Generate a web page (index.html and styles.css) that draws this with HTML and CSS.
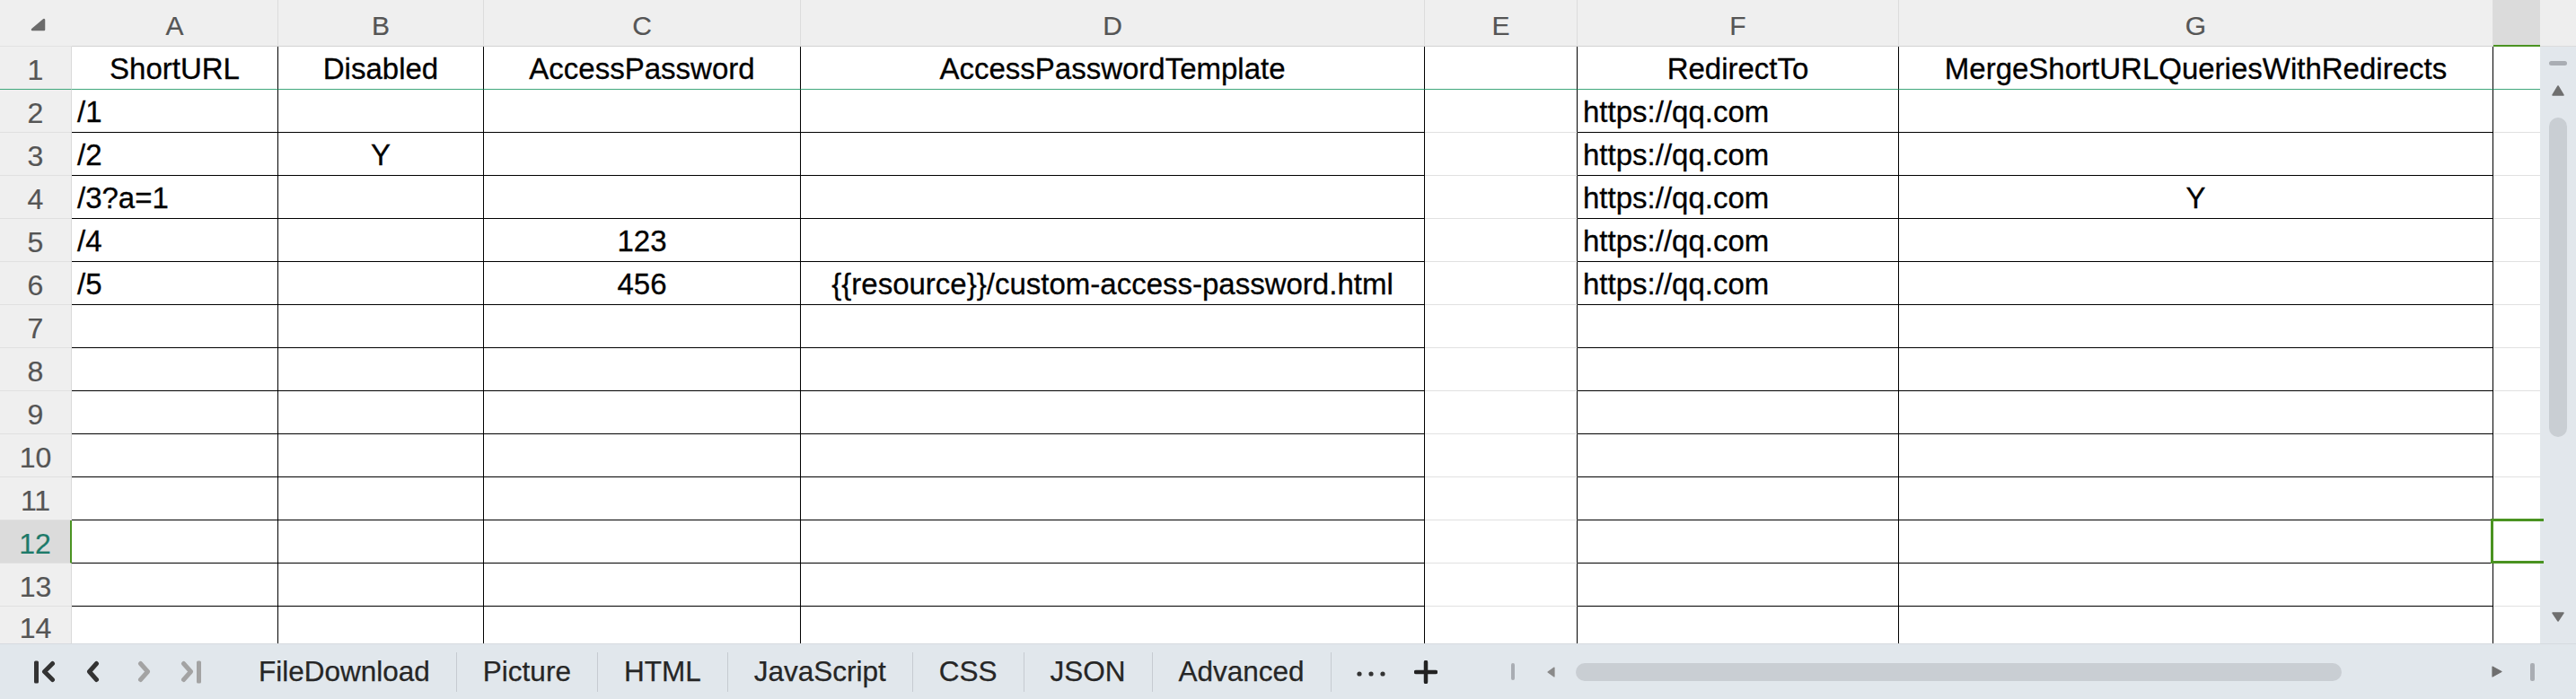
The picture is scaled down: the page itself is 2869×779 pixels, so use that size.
FILE: index.html
```html
<!DOCTYPE html>
<html>
<head>
<meta charset="utf-8">
<link rel="stylesheet" href="styles.css">
</head>
<body>
<div class="app">
  <div class="sheet">
    <div class="grid">
      <div class="corner"><svg class="tri" width="80" height="52" viewBox="0 0 80 52"><path d="M49 22 L49 33 L36 33 Z" fill="#6b6b6b" stroke="#6b6b6b" stroke-width="2.5" stroke-linejoin="round"/></svg></div>
      <div class="ch">A</div><div class="ch">B</div><div class="ch">C</div><div class="ch">D</div><div class="ch">E</div><div class="ch">F</div><div class="ch">G</div><div class="ch chsel"></div>

      <div class="rh r1">1</div>
      <div class="c r1 ctr">ShortURL</div>
      <div class="c r1 ctr">Disabled</div>
      <div class="c r1 ctr">AccessPassword</div>
      <div class="c r1 ctr">AccessPasswordTemplate</div>
      <div class="c r1 e"></div>
      <div class="c r1 ctr">RedirectTo</div>
      <div class="c r1 ctr">MergeShortURLQueriesWithRedirects</div>
      <div class="c r1 h"></div>

      <div class="rh">2</div>
      <div class="c">/1</div><div class="c"></div><div class="c"></div><div class="c"></div><div class="c e"></div><div class="c">https://qq.com</div><div class="c"></div><div class="c h"></div>

      <div class="rh">3</div>
      <div class="c">/2</div><div class="c ctr">Y</div><div class="c"></div><div class="c"></div><div class="c e"></div><div class="c">https://qq.com</div><div class="c"></div><div class="c h"></div>

      <div class="rh">4</div>
      <div class="c">/3?a=1</div><div class="c"></div><div class="c"></div><div class="c"></div><div class="c e"></div><div class="c">https://qq.com</div><div class="c ctr">Y</div><div class="c h"></div>

      <div class="rh">5</div>
      <div class="c">/4</div><div class="c"></div><div class="c ctr">123</div><div class="c"></div><div class="c e"></div><div class="c">https://qq.com</div><div class="c"></div><div class="c h"></div>

      <div class="rh">6</div>
      <div class="c">/5</div><div class="c"></div><div class="c ctr">456</div><div class="c ctr">{{resource}}/custom-access-password.html</div><div class="c e"></div><div class="c">https://qq.com</div><div class="c"></div><div class="c h"></div>

      <div class="rh">7</div>
      <div class="c"></div><div class="c"></div><div class="c"></div><div class="c"></div><div class="c e"></div><div class="c"></div><div class="c"></div><div class="c h"></div>

      <div class="rh">8</div>
      <div class="c"></div><div class="c"></div><div class="c"></div><div class="c"></div><div class="c e"></div><div class="c"></div><div class="c"></div><div class="c h"></div>

      <div class="rh">9</div>
      <div class="c"></div><div class="c"></div><div class="c"></div><div class="c"></div><div class="c e"></div><div class="c"></div><div class="c"></div><div class="c h"></div>

      <div class="rh">10</div>
      <div class="c"></div><div class="c"></div><div class="c"></div><div class="c"></div><div class="c e"></div><div class="c"></div><div class="c"></div><div class="c h"></div>

      <div class="rh">11</div>
      <div class="c"></div><div class="c"></div><div class="c"></div><div class="c"></div><div class="c e"></div><div class="c"></div><div class="c"></div><div class="c h"></div>

      <div class="rh rhsel">12</div>
      <div class="c"></div><div class="c"></div><div class="c"></div><div class="c"></div><div class="c e"></div><div class="c"></div><div class="c"></div><div class="c h active"></div>

      <div class="rh">13</div>
      <div class="c"></div><div class="c"></div><div class="c"></div><div class="c"></div><div class="c e"></div><div class="c"></div><div class="c"></div><div class="c h"></div>

      <div class="rh last">14</div>
      <div class="c last"></div><div class="c last"></div><div class="c last"></div><div class="c last"></div><div class="c e last"></div><div class="c last"></div><div class="c last"></div><div class="c h last"></div>
    </div>
    <div class="vscroll">
      <div class="vs-top"></div>
      <div class="vs-track">
        <div class="vs-handle"></div>
        <svg class="vs-up" width="14" height="12" viewBox="0 0 14 12"><path d="M7 1 L13 11 L1 11 Z" fill="#6f6f6f" stroke="#6f6f6f" stroke-width="1.5" stroke-linejoin="round"/></svg>
        <div class="vs-thumb"></div>
        <svg class="vs-down" width="14" height="11" viewBox="0 0 14 11"><path d="M1 1 L13 1 L7 10 Z" fill="#6f6f6f" stroke="#6f6f6f" stroke-width="1.5" stroke-linejoin="round"/></svg>
      </div>
    </div>
  </div>
  <div class="tabbar">
    <svg class="nav" width="200" height="26" viewBox="0 0 200 26">
      <rect x="8" y="0.5" width="5" height="25" rx="1.5" fill="#333"/>
      <polyline points="28.5,3.5 19.5,12.5 28.5,21.5" fill="none" stroke="#333" stroke-width="5" stroke-linecap="round" stroke-linejoin="round"/>
      <polyline points="77.5,3.5 69.5,12.5 77.5,21.5" fill="none" stroke="#333" stroke-width="5" stroke-linecap="round" stroke-linejoin="round"/>
      <polyline points="126.5,3.5 134.5,12.5 126.5,21.5" fill="none" stroke="#a3a3a3" stroke-width="5" stroke-linecap="round" stroke-linejoin="round"/>
      <polyline points="174.5,3.5 182.5,12.5 174.5,21.5" fill="none" stroke="#a3a3a3" stroke-width="5" stroke-linecap="round" stroke-linejoin="round"/>
      <rect x="189" y="0.5" width="5" height="25" rx="1.5" fill="#a3a3a3"/>
    </svg>
    <div class="tabs">
      <div class="tab">FileDownload</div>
      <div class="tab">Picture</div>
      <div class="tab">HTML</div>
      <div class="tab">JavaScript</div>
      <div class="tab">CSS</div>
      <div class="tab">JSON</div>
      <div class="tab">Advanced</div>
    </div>
    <svg class="more" width="34" height="8" viewBox="0 0 34 8"><circle cx="3" cy="4" r="2.6" fill="#333"/><circle cx="16" cy="4" r="2.6" fill="#333"/><circle cx="29" cy="4" r="2.6" fill="#333"/></svg>
    <svg class="add" width="26" height="26" viewBox="0 0 26 26"><path d="M13 2 V24 M2 13 H24" stroke="#222" stroke-width="4.5" stroke-linecap="round"/></svg>
    <div class="hscroll">
      <div class="hs-bar"></div>
      <svg class="hs-left" width="9" height="12" viewBox="0 0 9 12"><path d="M8 1 L1 6 L8 11 Z" fill="#8a8a8a" stroke="#8a8a8a" stroke-width="1.2" stroke-linejoin="round"/></svg>
      <div class="hs-thumb"></div>
      <svg class="hs-right" width="12" height="13" viewBox="0 0 12 13"><path d="M1 1 L11 6.5 L1 12 Z" fill="#6f6f6f" stroke="#6f6f6f" stroke-width="1.2" stroke-linejoin="round"/></svg>
      <div class="hs-bar hs-bar2"></div>
    </div>
  </div>
</div>
</body>
</html>
```

FILE: styles.css
```css
* { box-sizing: border-box; }
html, body { margin: 0; padding: 0; background: #fff; }
body { font-family: "Liberation Sans", Arial, sans-serif; }

.app {
  width: 2869px;
  height: 779px;
  display: flex;
  flex-direction: column;
  overflow: hidden;
}

.sheet {
  display: flex;
  height: 717px;
  overflow: hidden;
  flex: none;
}

.grid {
  display: grid;
  grid-template-columns: 80px 230px 229px 353px 695px 170px 358px 662px 52px;
  grid-template-rows: 52px repeat(13, 48px) 41px;
  width: 2829px;
  flex: none;
}

.corner {
  background: #efefef;
  border-bottom: 1px solid #e2e2e2;
}
.tri { display: block; }

.ch {
  background: #efefef;
  color: #555;
  font-size: 30px;
  border-right: 1px solid #dcdcdc;
  border-bottom: 1px solid #d2d2d2;
  display: flex;
  align-items: flex-end;
  justify-content: center;
  padding-bottom: 5px;
  line-height: 1.15;
  -webkit-text-stroke: 0.2px #555;
}
.ch.chsel {
  background: #dbdbdb;
  border-right: none;
  border-bottom: 2px solid #4a9321;
}

.rh {
  background: #efefef;
  color: #555;
  font-size: 32px;
  border-right: 1px solid #dadada;
  border-bottom: 1px solid #e0e0e0;
  display: flex;
  align-items: flex-end;
  justify-content: center;
  padding-bottom: 5px;
  line-height: 1;
  -webkit-text-stroke: 0.2px #555;
}
.rh.r1 { border-bottom-color: #41a87c; }
.rh.rhsel {
  background: #dbdbdb;
  color: #1d7a69;
  -webkit-text-stroke: 0.2px #1d7a69;
  border-right: 2px solid #4a9321;
}
.rh.last { border-bottom: none; padding-bottom: 1px; }

.c {
  position: relative;
  background: #fff;
  color: #000;
  font-size: 33px;
  line-height: 1.15;
  white-space: nowrap;
  border-right: 1px solid #000;
  border-bottom: 1px solid #000;
  display: flex;
  align-items: flex-end;
  padding: 0 5px 3px 6px;
  -webkit-text-stroke: 0.3px #000;
}
.c.ctr { justify-content: center; padding-left: 0; padding-right: 0; }
.c.e { border-bottom-color: #e1e1e1; }
.c.h { border-right: none; border-bottom-color: #e1e1e1; }
.c.r1 { border-bottom-color: #41a87c; }
.c.last { border-bottom: none; }

.c.active::after {
  content: "";
  position: absolute;
  left: -3px;
  top: -2px;
  right: -4px;
  bottom: -1px;
  border: 3px solid #4a9321;
  border-right: none;
  z-index: 2;
}

/* vertical scrollbar */
.vscroll {
  width: 40px;
  flex: none;
  display: flex;
  flex-direction: column;
}
.vs-top {
  height: 52px;
  background: #eeeeee;
  border-bottom: 1px solid #dcdcdc;
  flex: none;
}
.vs-track {
  flex: 1;
  background: #e2e7ec;
  display: flex;
  flex-direction: column;
  align-items: center;
}
.vs-handle {
  margin-top: 16px;
  width: 20px;
  height: 5px;
  border-radius: 3px;
  background: #a9adb3;
}
.vs-up { margin-top: 22px; display: block; }
.vs-thumb {
  margin-top: 24px;
  width: 20px;
  height: 356px;
  border-radius: 10px;
  background: #c9ced3;
}
.vs-down { margin-top: auto; margin-bottom: 24px; display: block; }

/* tab bar */
.tabbar {
  height: 62px;
  flex: none;
  border-top: 1px solid #d6dadf;
  background: #e1e7ec;
  display: flex;
  align-items: center;
}
.nav { margin-left: 30px; flex: none; display: block; }
.tabs {
  display: flex;
  margin-left: 29px;
  align-items: center;
}
.tab {
  height: 44px;
  padding: 0 29px;
  border-right: 1px solid #c6cbd1;
  display: flex;
  align-items: center;
  font-size: 31.5px;
  color: #262626;
  white-space: nowrap;
  -webkit-text-stroke: 0.25px #262626;
}
.more { margin-left: 28px; margin-top: 4px; display: block; flex: none; }
.add { margin-left: 30px; display: block; flex: none; }

.hscroll {
  margin-left: auto;
  margin-right: 46px;
  display: flex;
  align-items: center;
  flex: none;
}
.hs-bar {
  width: 4px;
  height: 19px;
  border-radius: 2px;
  background: #a9adb3;
}
.hs-left { margin-left: 36px; display: block; }
.hs-thumb {
  margin-left: 23px;
  width: 853px;
  height: 20px;
  border-radius: 10px;
  background: #c9ced3;
}
.hs-right { margin-left: 167px; display: block; }
.hs-bar2 { margin-left: 31px; width: 5px; height: 20px; }
```
